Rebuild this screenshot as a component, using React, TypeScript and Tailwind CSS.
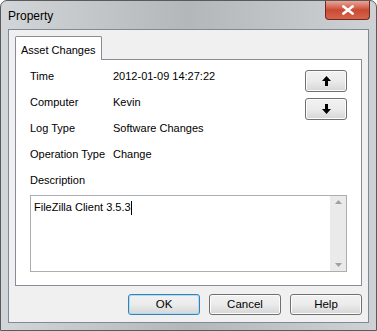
import React from "react";

const font = { fontFamily: '"Liberation Sans", Arial, sans-serif' };

function Btn({ children, def }: { children: React.ReactNode; def?: boolean }) {
  return (
    <div
      className={`w-[72px] h-[21px] rounded-[3px] border flex items-center justify-center text-[11.5px] text-black bg-gradient-to-b from-[#f2f2f2] via-[#ebebeb] to-[#d6d6d6] ${
        def ? "border-[#3c7fb1] shadow-[inset_0_0_0_1px_#a6dff8]" : "border-[#707070] shadow-[inset_0_0_0_1px_#fcfcfc]"
      }`}
    >
      {children}
    </div>
  );
}

function ArrowBtn({ up }: { up?: boolean }) {
  return (
    <div className="w-[42px] h-[22px] rounded-[3px] border border-[#707070] shadow-[inset_0_0_0_1px_#fcfcfc] bg-gradient-to-b from-[#f2f2f2] via-[#ebebeb] to-[#d6d6d6] flex items-center justify-center">
      <svg width="9" height="10" viewBox="0 0 9 10">
        {up ? (
          <path d="M4.5 0 L9 5 L6 5 L6 10 L3 10 L3 5 L0 5 Z" fill="#000" />
        ) : (
          <path d="M4.5 10 L9 5 L6 5 L6 0 L3 0 L3 5 L0 5 Z" fill="#000" />
        )}
      </svg>
    </div>
  );
}

function Row({ label, value }: { label: string; value: string }) {
  return (
    <div className="flex h-[26px] items-center">
      <div className="w-[83px]">{label}</div>
      <div>{value}</div>
    </div>
  );
}

export default function App() {
  return (
    <div
      className="w-[377px] h-[331px] overflow-hidden relative rounded-t-[7px] border border-[#5a5a5a] bg-gradient-to-r from-[#d3d6d9] via-[#b4b7ba] to-[#cfd2d5] flex flex-col"
      style={font}
    >
      <div className="h-[28px] flex items-start justify-between">
        <div className="pl-[7px] pt-[6px] text-[12px] text-black">Property</div>
        <div className="mr-[6px] w-[45px] h-[19px] rounded-b-[4px] border border-t-0 border-[#6b2a22] bg-gradient-to-b from-[#e8a597] via-[#c94a35] to-[#d6644a] flex items-center justify-center">
          <svg width="12" height="10" viewBox="0 0 12 10">
            <path d="M1.5 1.5 L10.5 8.5 M10.5 1.5 L1.5 8.5" stroke="#fff" strokeWidth="2.6" strokeLinecap="square" />
          </svg>
        </div>
      </div>
      <div className="mx-[7px] mb-[7px] flex-1 border border-[#808a94] bg-[#f0f0f0] flex flex-col text-[11px] text-black">
        <div className="mt-[6px] ml-[6px] mr-[6px] flex flex-col">
          <div className="flex">
            <div className="h-[24px] px-[5px] pt-[5px] border border-b-0 border-[#898c95] bg-white rounded-t-[2px] relative z-10 -mb-px text-[11px]">
              Asset Changes
            </div>
          </div>
          <div className="h-[227px] border border-[#898c95] bg-white flex flex-col pl-[14px] pr-[14px]">
            <div className="flex justify-between pt-[3px]">
              <div className="flex flex-col">
                <Row label="Time" value="2012-01-09 14:27:22" />
                <Row label="Computer" value="Kevin" />
                <Row label="Log Type" value="Software Changes" />
                <Row label="Operation Type" value="Change" />
                <Row label="Description" value="" />
              </div>
              <div className="flex flex-col gap-[6px] pt-[7px]">
                <ArrowBtn up />
                <ArrowBtn />
              </div>
            </div>
            <div className="mt-[2px] h-[77px] border border-[#abadb3] flex">
              <div className="flex-1 pl-[3px] pt-[3px]">
                FileZilla Client 3.5.3<span className="inline-block w-px h-[14px] bg-black align-middle" />
              </div>
              <div className="w-[16px] bg-[#eaeaea] flex flex-col items-center justify-between py-[4px]">
                <svg width="7" height="4" viewBox="0 0 7 4">
                  <path d="M0 4 L3.5 0 L7 4 Z" fill="#a0a0a0" />
                </svg>
                <svg width="7" height="4" viewBox="0 0 7 4">
                  <path d="M0 0 L3.5 4 L7 0 Z" fill="#a0a0a0" />
                </svg>
              </div>
            </div>
          </div>
        </div>
        <div className="flex justify-end gap-[9px] mt-[8px] mr-[6px]">
          <Btn def>OK</Btn>
          <Btn>Cancel</Btn>
          <Btn>Help</Btn>
        </div>
      </div>
    </div>
  );
}
